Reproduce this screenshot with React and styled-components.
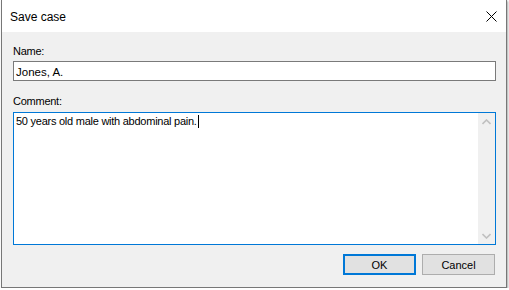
import React from "react";
import styled, { createGlobalStyle } from "styled-components";

const Global = createGlobalStyle`
  html, body { margin: 0; padding: 0; background: #ffffff; }
  body { font-family: "Liberation Sans", Arial, sans-serif; font-size: 11px; color: #000; }
`;

const Window = styled.div`
  margin-left: 1px;
  width: 506px;
  height: 288px;
  box-sizing: border-box;
  border: 1px solid #777777;
  border-top: none;
  background: #f0f0f0;
  box-shadow: 1px 1px 2px rgba(0, 0, 0, 0.35);
  display: flex;
  flex-direction: column;
`;

const TitleBar = styled.div`
  height: 32px;
  background: #ffffff;
  display: flex;
  align-items: center;
  justify-content: space-between;
  padding: 0 8px 0 8px;
  flex-shrink: 0;
`;

const Title = styled.span`
  font-size: 12px;
  line-height: 15px;
  margin-top: 3px;
`;

const CloseButton = styled.div`
  width: 12px;
  height: 12px;
  display: flex;
  align-items: center;
  justify-content: center;
  margin-right: 1px;
`;

const Body = styled.div`
  flex: 1;
  display: flex;
  flex-direction: column;
  padding: 12px 10px 0 11px;
`;

const Label = styled.div`
  font-size: 11px;
  letter-spacing: -0.25px;
  line-height: 15px;
  height: 15px;
  margin-bottom: 2px;
  margin-top: ${(p) => p.$top || 0}px;
`;

const TextBox = styled.div`
  height: 20px;
  box-sizing: border-box;
  border: 1px solid #7a7a7a;
  background: #ffffff;
  padding: 1px 2px 0 2px;
  display: flex;
  align-items: center;
  font-size: 11.5px;
`;

const Memo = styled.div`
  margin-top: 1px;
  height: 133px;
  box-sizing: border-box;
  border: 1px solid #0078d7;
  background: #ffffff;
  display: flex;
`;

const MemoText = styled.div`
  flex: 1;
  padding: 1px 2px;
  font-size: 11px;
  letter-spacing: -0.25px;
  line-height: 15px;
`;

const Caret = styled.span`
  display: inline-block;
  width: 1px;
  height: 13px;
  background: #000;
  vertical-align: -3px;
  margin-left: 1px;
`;

const ScrollBar = styled.div`
  width: 17px;
  background: #f0f0f0;
  display: flex;
  flex-direction: column;
  justify-content: space-between;
  align-items: center;
`;

const Arrow = styled.div`
  height: 17px;
  width: 17px;
  display: flex;
  align-items: center;
  justify-content: center;
`;

const ButtonRow = styled.div`
  display: flex;
  justify-content: flex-end;
  gap: 6px;
  margin-top: 9px;
  padding-right: 1px;
`;

const Button = styled.div`
  width: 73px;
  height: 21px;
  box-sizing: border-box;
  background: #e1e1e1;
  border: ${(p) => (p.$default ? "2px solid #0078d7" : "1px solid #adadad")};
  display: flex;
  align-items: center;
  justify-content: center;
  font-size: 11px;
`;

const Chevron = ({ up }) => (
  <svg width="9" height="6" viewBox="0 0 9 6">
    <path
      d={up ? "M0.5 5 L4.5 1 L8.5 5" : "M0.5 1 L4.5 5 L8.5 1"}
      fill="none"
      stroke="#c0c0c0"
      strokeWidth="1.6"
    />
  </svg>
);

export default function App() {
  return (
    <>
      <Global />
      <Window>
        <TitleBar>
          <Title>Save case</Title>
          <CloseButton>
            <svg width="11" height="11" viewBox="0 0 11 11">
              <path d="M0.5 0.5 L10.5 10.5 M10.5 0.5 L0.5 10.5" stroke="#000" strokeWidth="1" />
            </svg>
          </CloseButton>
        </TitleBar>
        <Body>
          <Label>Name:</Label>
          <TextBox>Jones, A.</TextBox>
          <Label $top={13}>Comment:</Label>
          <Memo>
            <MemoText>
              50 years old male with abdominal pain.<Caret />
            </MemoText>
            <ScrollBar>
              <Arrow>
                <Chevron up />
              </Arrow>
              <Arrow>
                <Chevron />
              </Arrow>
            </ScrollBar>
          </Memo>
          <ButtonRow>
            <Button $default>OK</Button>
            <Button>Cancel</Button>
          </ButtonRow>
        </Body>
      </Window>
    </>
  );
}
